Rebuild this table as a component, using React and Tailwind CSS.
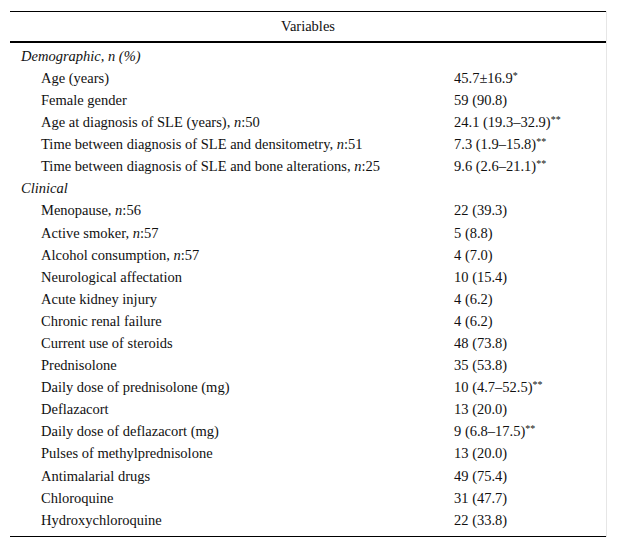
import React from "react";

const rows = [
  { section: "Demographic, n (%)" },
  { label: "Age (years)", value: "45.7±16.9", sup: "*" },
  { label: "Female gender", value: "59 (90.8)" },
  { label: "Age at diagnosis of SLE (years), ", n: "50", value: "24.1 (19.3–32.9)", sup: "**" },
  { label: "Time between diagnosis of SLE and densitometry, ", n: "51", value: "7.3 (1.9–15.8)", sup: "**" },
  { label: "Time between diagnosis of SLE and bone alterations, ", n: "25", value: "9.6 (2.6–21.1)", sup: "**" },
  { section: "Clinical" },
  { label: "Menopause, ", n: "56", value: "22 (39.3)" },
  { label: "Active smoker, ", n: "57", value: "5 (8.8)" },
  { label: "Alcohol consumption, ", n: "57", value: "4 (7.0)" },
  { label: "Neurological affectation", value: "10 (15.4)" },
  { label: "Acute kidney injury", value: "4 (6.2)" },
  { label: "Chronic renal failure", value: "4 (6.2)" },
  { label: "Current use of steroids", value: "48 (73.8)" },
  { label: "Prednisolone", value: "35 (53.8)" },
  { label: "Daily dose of prednisolone (mg)", value: "10 (4.7–52.5)", sup: "**" },
  { label: "Deflazacort", value: "13 (20.0)" },
  { label: "Daily dose of deflazacort (mg)", value: "9 (6.8–17.5)", sup: "**" },
  { label: "Pulses of methylprednisolone", value: "13 (20.0)" },
  { label: "Antimalarial drugs", value: "49 (75.4)" },
  { label: "Chloroquine", value: "31 (47.7)" },
  { label: "Hydroxychloroquine", value: "22 (33.8)" },
];

function Row({ row }) {
  if (row.section) {
    // section heading, italic, smaller indent
    return (
      <div className="flex h-[22.1px] items-center pl-[11px] italic">
        {row.section}
      </div>
    );
  }
  return (
    <div className="flex h-[22.1px] items-center">
      <div className="w-[444px] pl-[31px]">
        {row.label}
        {row.n && (
          <>
            <i>n</i>:{row.n}
          </>
        )}
      </div>
      <div className="flex-1">
        {row.value}
        {row.sup && (
          <sup className="relative -top-[4px] text-[10px]">{row.sup}</sup>
        )}
      </div>
    </div>
  );
}

export default function App() {
  return (
    <div className="min-h-[547px] bg-white pt-[11px] font-serif">
      <div className="ml-[10px] w-[597px] border-r border-[#e6e6e6] [font-family:Liberation_Serif,serif] text-[14.5px] leading-none text-[#111]">
        <div className="w-[596px] border-t border-black">
          <div className="flex h-[31px] items-center justify-center border-b-2 border-black">
            Variables
          </div>
          <div className="pt-[2px] pb-[5px]">
            {rows.map((r, i) => (
              <Row key={i} row={r} />
            ))}
          </div>
          <div className="border-t border-black" />
        </div>
      </div>
    </div>
  );
}
